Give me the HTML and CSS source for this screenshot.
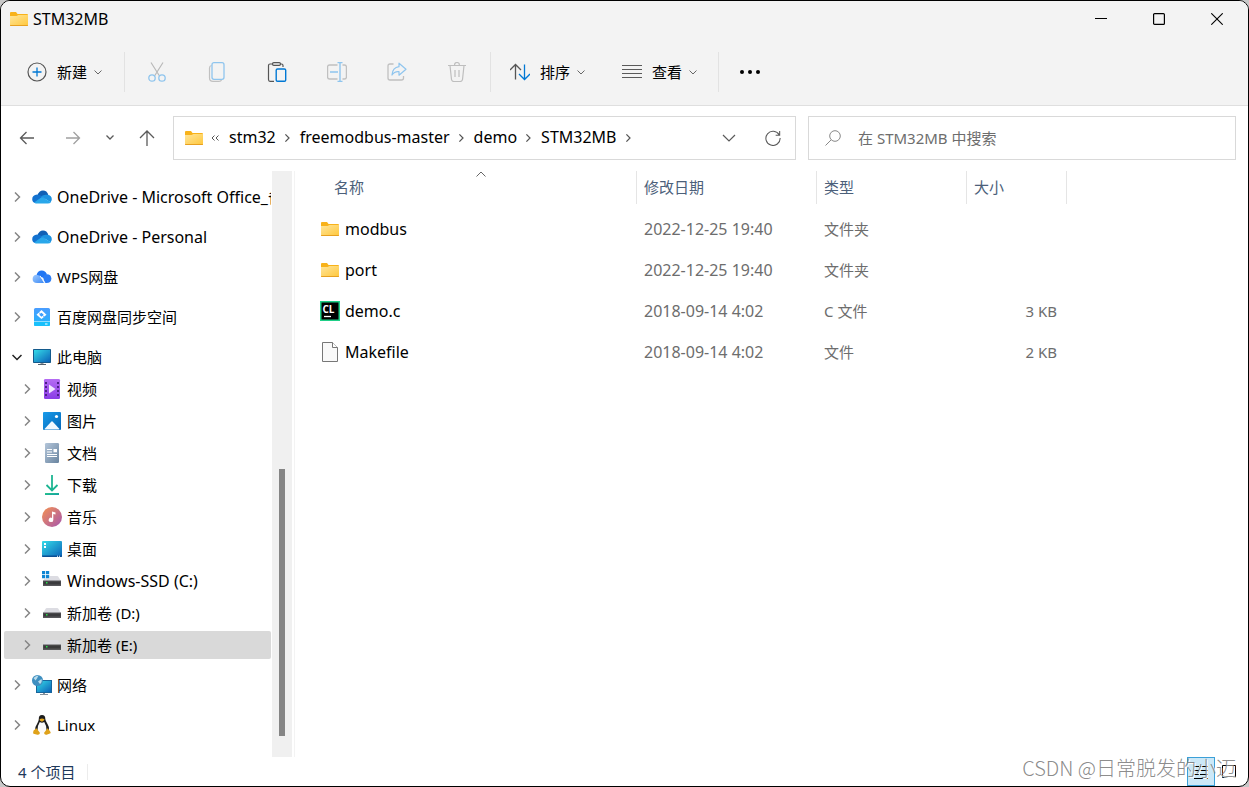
FILE: index.html
```
<!DOCTYPE html>
<html lang="zh-CN">
<head>
<meta charset="utf-8">
<title>STM32MB</title>
<link rel="stylesheet" href="styles.css">
</head>
<body>
<svg class="defs" aria-hidden="true">
  <defs>
    <linearGradient id="gFolder" x1="0" y1="0" x2="1" y2="1"><stop offset="0" stop-color="#ffe59a"/><stop offset="1" stop-color="#ffc83d"/></linearGradient>
    <linearGradient id="gScreen" x1="0" y1="0" x2="1" y2="1"><stop offset="0" stop-color="#35dbe8"/><stop offset="1" stop-color="#0b62b8"/></linearGradient>
    <linearGradient id="gVideo" x1="0" y1="0" x2="0" y2="1"><stop offset="0" stop-color="#b56cf3"/><stop offset="1" stop-color="#8a3ce6"/></linearGradient>
    <linearGradient id="gPicture" x1="0" y1="0" x2="1" y2="1"><stop offset="0" stop-color="#189bea"/><stop offset="1" stop-color="#0567b8"/></linearGradient>
    <linearGradient id="gDoc" x1="0" y1="0" x2="1" y2="1"><stop offset="0" stop-color="#b4c6da"/><stop offset="1" stop-color="#69849f"/></linearGradient>
    <linearGradient id="gDown" x1="0" y1="0" x2="1" y2="1"><stop offset="0" stop-color="#2dc88a"/><stop offset="1" stop-color="#0e9ba5"/></linearGradient>
    <linearGradient id="gMusic" x1="0" y1="0" x2="1" y2="1"><stop offset="0" stop-color="#f59250"/><stop offset="1" stop-color="#a656b0"/></linearGradient>
    <linearGradient id="gBaidu" x1="0" y1="0" x2="0" y2="1"><stop offset="0" stop-color="#4a9dff"/><stop offset="1" stop-color="#1fb6fb"/></linearGradient>
    <linearGradient id="gWps" x1="0" y1="0" x2="1" y2="1"><stop offset="0" stop-color="#9cc8ff"/><stop offset="1" stop-color="#3f8cf5"/></linearGradient>
    <symbol id="folder" viewBox="0 0 20 20">
      <path d="M1 4q0-1 1-1h5l1.500 2H18q1 0 1 1v3H1z" fill="#f8b21a"/>
      <path d="M1 7h6.500l2-1H19v10.500H1z" fill="url(#gFolder)"/>
      <path d="M1 16h18v.6q0 .4-.5.400h-17q-.5 0-.5-.4z" fill="#e7a020"/>
    </symbol>
    <symbol id="onedrive" viewBox="0 0 20 20">
      <path d="M5.500 8.200Q7 3.500 11 3.500q4 0 5.300 4.300L10 11z" fill="#0f5fb5"/>
      <path d="M.2 12.300q0-4.600 5-4.900 2.500 0 4.300 1.700l4 3-9.500 4.200Q.2 15.800.2 12.300z" fill="#1372d0"/>
      <path d="M9 9.300q3-2.200 6.500-1.500 4.300.5 4.300 4.500 0 1.700-1.300 2.900z" fill="#1b91e0"/>
      <path d="M2.200 15.500q4-3 7.800-5.500l9 5.200q-1.200 1.200-3.200 1.200H4.500q-1.500 0-2.300-.9z" fill="#29a7ea"/>
    </symbol>
    <symbol id="wps" viewBox="0 0 20 20">
      <path d="M4.500 8.500Q5.500 3.500 9.800 3.500q3.500 0 5 3.500l-2.800 4z" fill="#2176f3"/>
      <path d="M14 7.300q5-.5 5.400 4.200-.2 4.500-5 4.500h-1.500l-2-6q1.300-2 3.100-2.700z" fill="#2c7df5"/>
      <path d="M.6 12q0-4 4-4.200 2.600 0 4.300 2.600L12 16H5Q.6 16 .6 12z" fill="url(#gWps)"/>
      <path d="M8 8.800l5 7.200" stroke="#e7f2ff" stroke-width="1"/>
    </symbol>
    <symbol id="baidu" viewBox="0 0 20 20">
      <rect x="2" y="1" width="16" height="18" rx="1.500" fill="url(#gBaidu)"/>
      <path d="M2 14h16v3.500q0 1.500-1.500 1.500h-13Q2 19 2 17.500z" fill="#18c0fb"/>
      <path d="M2 14.500h16" stroke="#8fdcff"/>
      <path d="M9.500 3l5 4.700-5 4.300-5-4.300z" fill="#fff"/><path d="M9.500 5.800l2.200 2-2.200 1.900-2.200-1.900z" fill="#359cfb"/>
      <path d="M6 5l7 5.500" stroke="#4aa5ff" stroke-width=".8"/>
      <path d="M13 17h2.500" stroke="#fff"/>
    </symbol>
    <symbol id="pc" viewBox="0 0 20 20">
      <rect x="1" y="2" width="18" height="14" rx=".7" fill="#145a8c"/><rect x="2" y="3" width="16" height="12" fill="url(#gScreen)"/>
      <path d="M8.500 16h3v1.500h-3z" fill="#8a949c"/><path d="M6 17h8v1H6z" fill="#56616b"/>
    </symbol>
    <symbol id="video" viewBox="0 0 20 20">
      <rect x="2" y="0" width="16" height="20" rx="1.200" fill="url(#gVideo)"/>
      <path d="M4 3v15M16 3v15" stroke="#4d2188" stroke-width="2" stroke-dasharray="2 2"/>
      <path d="M7 5.500v9l6.500-4.500z" fill="#f1e6ff"/>
    </symbol>
    <symbol id="picture" viewBox="0 0 20 20">
      <rect x="1" y="1" width="18" height="18" rx="1" fill="url(#gPicture)"/>
      <path d="M2.500 18l6.700-7.300q.8-.7 1.600 0L17.500 18q-.2.500-.8.500H3.300q-.6 0-.8-.5z" fill="#f1f8ff"/><circle cx="14.500" cy="5.500" r="1.600" fill="#fff"/>
    </symbol>
    <symbol id="doc" viewBox="0 0 20 20">
      <rect x="3" y="0" width="14" height="20" rx="1.200" fill="url(#gDoc)"/>
      <path d="M5 6.500h5M5 9h5M5 11.500h10M5 13.500h10" stroke="#fff" stroke-width="1.200"/><path d="M11.500 6h3.500v3.200h-3.500z" fill="#fff"/>
    </symbol>
    <symbol id="download" viewBox="0 0 20 20">
      <path d="M10 0v15M4.500 10l5.500 5.500 5.500-5.500" fill="none" stroke="#1db592" stroke-width="1.800"/>
      <path d="M3 18h14v2H3z" fill="url(#gDown)"/>
    </symbol>
    <symbol id="music" viewBox="0 0 20 20">
      <circle cx="10" cy="10" r="10" fill="url(#gMusic)"/>
      <path d="M10 4.500l3.500 1v2l-2.200-.6v6a2.300 2.200 0 1 1-1.300-2z" fill="#fff"/>
    </symbol>
    <symbol id="desktop" viewBox="0 0 20 20">
      <rect x="0" y="2" width="20" height="16" rx="1" fill="url(#gScreen)"/>
      <path d="M0 16.500h20v.5q0 1-1 1H1q-1 0-1-1z" fill="#0b4f94"/>
      <path d="M2 4h2v2H2zM2 7h2v2H2zM15 16.700h1v1h-1zM17 16.700h1v1h-1z" fill="#fff"/>
    </symbol>
    <symbol id="drive" viewBox="0 0 20 20">
      <path d="M3.500 6q.3-1 1.500-1h10q1.200 0 1.500 1L19 10H1z" fill="#dcdce2"/>
      <path d="M1 9.500h18V15H1z" fill="#56565a"/><path d="M1.500 10.500h17v3h-17z" fill="#3a3a3d"/><path d="M4 11h1.500v1.500H4z" fill="#28e04a"/>
    </symbol>
    <symbol id="ssd" viewBox="0 0 20 20">
      <use href="#drive"/>
      <path d="M0 0h7.500v7.500H0z" fill="#fff"/>
      <path d="M0 0h3.200v3.200H0zM4 0h3.200v3.200H4zM0 4h3.200v3.200H0zM4 4h3.200v3.200H4z" fill="#0e86d4"/>
    </symbol>
    <symbol id="network" viewBox="0 0 20 20">
      <path d="M4 5h16v13H4z" fill="#17659c"/><path d="M5 6h14v11H5z" fill="url(#gScreen)"/>
      <path d="M11 18h2v1.500h-2zM8 19h8v1H8z" fill="#84919c"/>
      <circle cx="5.500" cy="5.500" r="5.500" fill="#3f8fc0"/><path d="M1.500 3q2.500-2.500 5-2.500L5 3.500 3.500 5.500zM6 6.500l3.500-2.500q1 3-1.500 5z" fill="#b9dcec"/>
    </symbol>
    <symbol id="tux" viewBox="0 0 20 20">
      <path d="M6.800 4q-.2-4 3.200-4t3.300 4q.2 2 2.200 5t1.500 6l-3 3H6.200l-3-3Q2.800 12 5 9q1.900-3 1.800-5z" fill="#1d1d1d"/>
      <path d="M7.800 7q2.200 1.500 4.400 0 2.600 4 2.300 8-.5 3.500-4.500 3.500T5.500 15q-.2-4 2.300-8z" fill="#fafafa"/>
      <path d="M7.500 4.300q2.500-1.500 5 0 0 1.300-2.500 2.500-2.500-1-2.500-2.500z" fill="#e8a91c"/>
      <path d="M4.500 13.200l3.500 4.800q-.5 2.200-2.700 1.700l-3.800-1q-.8-.6.100-3.200zM15.500 13.200L12 18q.5 2.200 2.700 1.700l3.800-1.500q.6-1-1-2.800z" fill="#dfa21a"/>
    </symbol>
    <symbol id="clion" viewBox="0 0 20 20">
      <path d="M0 0h20v20H0z" fill="#1fcf87"/><path d="M1.500 1.500h17v17h-17z" fill="#000"/>
      <text x="2.500" y="11.500" class="cl-text">CL</text><path d="M4 15.500h7" stroke="#fff" stroke-width="1.300"/>
    </symbol>
    <symbol id="file" viewBox="0 0 20 20">
      <path d="M2.500.5h10L17.500 5.500v14h-15z" fill="#f9f9f9" stroke="#777"/><path d="M12.500.5v5h5" fill="#fff" stroke="#777"/>
    </symbol>
    <symbol id="chev" viewBox="0 0 10 10"><path d="M3 .5L7.500 5 3 9.500" fill="none" stroke="currentColor" stroke-width="1.500"/></symbol>
    <symbol id="down" viewBox="0 0 10 10"><path d="M1.500 3.500L5 7l3.500-3.500" fill="none" stroke="currentColor"/></symbol>
  </defs>
</svg>

<main class="window">
  <header class="titlebar">
    <svg class="icon"><use href="#folder"/></svg>
    <h1 class="title">STM32MB</h1>
    <button class="caption" aria-label="最小化"><svg viewBox="0 0 12 12"><path d="M0 5.500h12" stroke="#000"/></svg></button>
    <button class="caption" aria-label="最大化"><svg viewBox="0 0 12 12"><rect x=".6" y=".6" width="10.800" height="10.800" rx="1" fill="none" stroke="#000" stroke-width="1.200"/></svg></button>
    <button class="caption" aria-label="关闭"><svg viewBox="0 0 12 12"><path d="M.3.3l11.400 11.400M11.700.3L.3 11.700" stroke="#000" stroke-width="1.100"/></svg></button>
  </header>

  <div class="toolbar" role="toolbar" aria-label="命令">
    <button class="cmd cmd-new">
      <svg class="icon" viewBox="0 0 20 20" fill="none"><circle cx="10" cy="10" r="9" stroke="#555" stroke-width="1.200"/><path d="M10 5.500v9M5.500 10h9" stroke="#0078d4" stroke-width="1.300"/></svg>
      <span>新建</span><svg class="caret"><use href="#down"/></svg>
    </button>
    <div class="tools">
      <button class="tool" aria-label="剪切"><svg class="icon" viewBox="0 0 20 20" fill="none"><path d="M4 .5l8.500 13.500M16 .5L7.500 14" stroke="#b9b9b9" stroke-width="1.200"/><circle cx="5" cy="16" r="3.200" stroke="#8fc5ee" stroke-width="1.300"/><circle cx="15" cy="16" r="3.200" stroke="#8fc5ee" stroke-width="1.300"/></svg></button>
      <button class="tool" aria-label="复制"><svg class="icon" viewBox="0 0 20 20" fill="none"><path d="M4.500 3.500q-2 .3-2 2.500v10q0 3.400 3.500 3.400h6q2 0 2.500-1.400" stroke="#c0c0c0" stroke-width="1.200"/><rect x="5" y=".7" width="12" height="16.600" rx="2" fill="#f3f3f3" stroke="#8fc5ee" stroke-width="1.300"/></svg></button>
      <button class="tool" aria-label="粘贴"><svg class="icon" viewBox="0 0 20 20" fill="none"><path d="M5.500 2H3q-1.500 0-1.500 1.500v14Q1.500 19.300 3 19.300h4M13.500 2h1q1.500 0 1.500 1.500V5" stroke="#555" stroke-width="1.200"/><rect x="5.500" y=".6" width="8" height="2.700" rx="1.300" stroke="#555" stroke-width="1.200"/><rect x="9.200" y="7" width="9.500" height="12.300" rx="1.300" fill="#f3f3f3" stroke="#0078d4" stroke-width="1.400"/></svg></button>
      <button class="tool" aria-label="重命名"><svg class="icon" viewBox="0 0 20 20" fill="none"><path d="M10.500 3H2.500Q.6 3 .6 5v10q0 2 1.900 2h8M15.500 3h2q1.900 0 1.900 2v10q0 2-1.900 2h-2" stroke="#c0c0c0" stroke-width="1.300"/><path d="M10.500.6h5M10.500 19.400h5M13 .6v18.800M3 10h8" stroke="#8fc5ee" stroke-width="1.400"/></svg></button>
      <button class="tool" aria-label="共享"><svg class="icon" viewBox="0 0 20 20" fill="none"><path d="M6.500 2H3Q1 2 1 4v12q0 2 2 2h11.500q2 0 2-2v-2" stroke="#c0c0c0" stroke-width="1.300"/><path d="M12 1.200l7 6-7 6v-3.500q-4.500-.5-7 3.300.5-7.500 7-8.300z" stroke="#8fc5ee" stroke-width="1.200" stroke-linejoin="round"/></svg></button>
      <button class="tool" aria-label="删除"><svg class="icon" viewBox="0 0 20 20" fill="none" stroke="#bebebe" stroke-width="1.200"><path d="M1 3.500h18M7.500 3.500q0-3 2.500-3t2.500 3M3 3.500l1.500 14q.3 2 2.300 2h6.400q2 0 2.300-2L17 3.500M8 8v7M12 8v7"/></svg></button>
    </div>
    <button class="cmd cmd-sort">
      <svg class="icon" viewBox="0 0 20 20" fill="none"><path d="M5.500 17.500V2.500M0 8l5.500-5.500L11 8" stroke="#555" stroke-width="1.300"/><path d="M14.500 2.500v15M9 12l5.500 5.500L20 12" stroke="#0078d4" stroke-width="1.300"/></svg>
      <span>排序</span><svg class="caret"><use href="#down"/></svg>
    </button>
    <button class="cmd cmd-view">
      <svg class="icon" viewBox="0 0 20 20"><path d="M0 3.500h20M0 7.500h20M0 11.500h20M0 15.500h20" stroke="#5a5a5a" stroke-width="1.100"/></svg>
      <span>查看</span><svg class="caret"><use href="#down"/></svg>
    </button>
    <button class="more" aria-label="更多"><svg viewBox="0 0 22 6"><circle cx="3" cy="3" r="2"/><circle cx="11" cy="3" r="2"/><circle cx="19" cy="3" r="2"/></svg></button>
  </div>

  <div class="location">
    <button class="go" aria-label="后退"><svg viewBox="0 0 16 16"><path d="M15 8H1.500M7.500 2l-6 6 6 6"/></svg></button>
    <button class="go go-off" aria-label="前进"><svg viewBox="0 0 16 16"><path d="M1 8h13.500M8.500 2l6 6-6 6"/></svg></button>
    <button class="go go-recent" aria-label="最近浏览的位置"><svg viewBox="0 0 16 16"><path d="M4.500 5.500L8 9l3.500-3.500"/></svg></button>
    <button class="go" aria-label="上移"><svg viewBox="0 0 16 16"><path d="M8 16V1M1 8l7-7 7 7"/></svg></button>
    <nav class="address" aria-label="地址">
      <svg class="icon"><use href="#folder"/></svg>
      <button class="overflow" aria-label="更多路径"><svg viewBox="0 0 10 10"><path d="M4.500 2.500L2 5l2.500 2.500M8.500 2.500L6 5l2.500 2.500"/></svg></button>
      <a href="#">stm32</a><svg class="sep"><use href="#chev"/></svg>
      <a href="#">freemodbus-master</a><svg class="sep"><use href="#chev"/></svg>
      <a href="#">demo</a><svg class="sep"><use href="#chev"/></svg>
      <a href="#">STM32MB</a><svg class="sep"><use href="#chev"/></svg>
      <button class="addr-btn addr-first" aria-label="历史"><svg viewBox="0 0 16 16"><path d="M2 5l6 6 6-6"/></svg></button>
      <button class="addr-btn" aria-label="刷新"><svg viewBox="0 0 18 18"><path d="M16 5.500A8 8 0 1 0 17 9M16.500 1v5H12"/></svg></button>
    </nav>
    <label class="search">
      <svg viewBox="0 0 16 16"><circle cx="10" cy="6" r="5.300"/><path d="M6.200 9.800L.5 15.500"/></svg>
      <input type="search" placeholder="在 STM32MB 中搜索" aria-label="搜索">
    </label>
  </div>

  <div class="body">
    <nav class="tree" aria-label="导航窗格">
      <ul class="roots">
        <li><a class="node latin" href="#"><svg class="twist"><use href="#chev"/></svg><svg class="icon"><use href="#onedrive"/></svg>OneDrive - Microsoft Office_备</a></li>
        <li><a class="node latin" href="#"><svg class="twist"><use href="#chev"/></svg><svg class="icon"><use href="#onedrive"/></svg>OneDrive - Personal</a></li>
        <li><a class="node" href="#"><svg class="twist"><use href="#chev"/></svg><svg class="icon"><use href="#wps"/></svg>WPS网盘</a></li>
        <li><a class="node" href="#"><svg class="twist"><use href="#chev"/></svg><svg class="icon"><use href="#baidu"/></svg>百度网盘同步空间</a></li>
        <li><a class="node" href="#"><svg class="twist open" viewBox="0 0 10 10"><path d="M.5 3L5 7.500 9.500 3" fill="none" stroke="currentColor" stroke-width="1.500"/></svg><svg class="icon"><use href="#pc"/></svg>此电脑</a>
          <ul class="children">
            <li><a class="node" href="#"><svg class="twist"><use href="#chev"/></svg><svg class="icon"><use href="#video"/></svg>视频</a></li>
            <li><a class="node" href="#"><svg class="twist"><use href="#chev"/></svg><svg class="icon"><use href="#picture"/></svg>图片</a></li>
            <li><a class="node" href="#"><svg class="twist"><use href="#chev"/></svg><svg class="icon"><use href="#doc"/></svg>文档</a></li>
            <li><a class="node" href="#"><svg class="twist"><use href="#chev"/></svg><svg class="icon"><use href="#download"/></svg>下载</a></li>
            <li><a class="node" href="#"><svg class="twist"><use href="#chev"/></svg><svg class="icon"><use href="#music"/></svg>音乐</a></li>
            <li><a class="node" href="#"><svg class="twist"><use href="#chev"/></svg><svg class="icon"><use href="#desktop"/></svg>桌面</a></li>
            <li><a class="node latin" href="#"><svg class="twist"><use href="#chev"/></svg><svg class="icon"><use href="#ssd"/></svg>Windows-SSD (C:)</a></li>
            <li><a class="node" href="#"><svg class="twist"><use href="#chev"/></svg><svg class="icon"><use href="#drive"/></svg>新加卷 (D:)</a></li>
            <li><a class="node selected" href="#"><svg class="twist"><use href="#chev"/></svg><svg class="icon"><use href="#drive"/></svg>新加卷 (E:)</a></li>
          </ul>
        </li>
        <li><a class="node" href="#"><svg class="twist"><use href="#chev"/></svg><svg class="icon"><use href="#network"/></svg>网络</a></li>
        <li><a class="node" href="#"><svg class="twist"><use href="#chev"/></svg><svg class="icon"><use href="#tux"/></svg>Linux</a></li>
      </ul>
    </nav>
    <div class="scrollbar"><div class="thumb"></div></div>
    <section class="files">
      <table class="list">
        <colgroup><col class="c-name"><col class="c-date"><col class="c-type"><col class="c-size"></colgroup>
        <thead><tr>
          <th><div class="head"><svg class="sort" viewBox="0 0 10 6"><path d="M.5 5.500L5 1l4.500 4.500"/></svg>名称</div></th>
          <th><div class="head">修改日期</div></th><th><div class="head">类型</div></th><th><div class="head">大小</div></th>
        </tr></thead>
        <tbody>
          <tr><td><span class="name latin"><svg class="icon"><use href="#folder"/></svg>modbus</span></td><td class="latin">2022-12-25 19:40</td><td>文件夹</td><td></td></tr>
          <tr><td><span class="name latin"><svg class="icon"><use href="#folder"/></svg>port</span></td><td class="latin">2022-12-25 19:40</td><td>文件夹</td><td></td></tr>
          <tr><td><span class="name latin"><svg class="icon"><use href="#clion"/></svg>demo.c</span></td><td class="latin">2018-09-14 4:02</td><td>C 文件</td><td class="num">3 KB</td></tr>
          <tr><td><span class="name latin"><svg class="icon"><use href="#file"/></svg>Makefile</span></td><td class="latin">2018-09-14 4:02</td><td>文件</td><td class="num">2 KB</td></tr>
        </tbody>
      </table>
    </section>
  </div>

  <footer class="status">
    <span class="count">4 个项目</span>
    <button class="view view-on" aria-label="详细信息"><svg viewBox="0 0 16 16"><path d="M1 2.500h5M7 2.500h8M1 6.500h5M7 6.500h8M1 10.500h5M7 10.500h8M1 14.500h14"/></svg></button>
    <button class="view" aria-label="大图标"><svg viewBox="0 0 16 16"><path d="M1.500 1.500h13v12h-13z"/></svg></button>
    <span class="watermark">CSDN @日常脱发的小迈</span>
  </footer>
</main>
</body>
</html>
```
FILE: styles.css
```
* { box-sizing: border-box; }
body {
  margin: 0;
  background: #c8c8c8;
  color: #000;
  font: 15px/20px "Noto Sans", "Noto Sans CJK SC", sans-serif;
}
button, input { font: inherit; color: inherit; border: 0; padding: 0; background: none; }
button { display: flex; align-items: center; justify-content: center; }
a { color: inherit; text-decoration: none; }
ul { list-style: none; margin: 0; padding: 0; }
svg { flex: none; display: block; }
.defs { position: absolute; width: 0; height: 0; }
.icon { width: 20px; height: 20px; }
.latin { font-size: 16px; }
.cl-text { font: bold 10px "Open Sans", sans-serif; fill: #fff; }

.window {
  display: flex;
  flex-direction: column;
  min-height: 100vh;
  border: 1px solid #000;
  border-radius: 10px;
  background: #fff;
  overflow: hidden;
}

.titlebar { display: flex; align-items: center; height: 36px; padding: 0 2px 0 8px; background: #f3f3f3; }
.title { flex: 1; margin: 0 0 0 4px; font-size: 16px; font-weight: 400; }
.caption { width: 58px; height: 36px; }
.caption svg { width: 12px; height: 12px; }

.toolbar {
  display: flex;
  align-items: center;
  padding: 15px 0 13px;
  background: #f3f3f3;
  border-bottom: 1px solid #dfdfdf;
}
.cmd { height: 40px; gap: 10px; white-space: nowrap; }
.caret { width: 10px; height: 10px; color: #666; margin-left: -4px; }
.cmd-new { width: 124px; padding: 0 0 0 26px; justify-content: flex-start; border-right: 1px solid #e2e2e2; }
.tools { display: flex; padding: 0 3px 0 2px; border-right: 1px solid #e2e2e2; }
.tool { width: 60px; height: 40px; }
.cmd-sort { padding: 0 17px 0 19px; }
.cmd-view { padding: 0 20px 0 19px; border-right: 1px solid #e2e2e2; }
.more { width: 62px; height: 40px; }
.more svg { width: 22px; height: 6px; }

.location { display: flex; padding: 10px 12px 11px 3px; }
.go { width: 46px; height: 44px; }
.go svg { width: 16px; height: 16px; fill: none; stroke: #5a5a5a; stroke-width: 1.300; }
.go-off svg { stroke: #a0a0a0; }
.go-recent { width: 28px; }
.address {
  flex: 1;
  display: flex;
  align-items: center;
  height: 44px;
  margin: 0 12px 0 3px;
  padding: 0 0 0 10px;
  border: 1px solid #d9d9d9;
  font-size: 16px;
}
.address a { padding-bottom: 2px; }
.overflow { width: 22px; margin-right: 3px; }
.overflow svg, .sep { width: 10px; height: 10px; }
.overflow svg { fill: none; stroke: #555; }
.sep { margin: 0 8px 0 6px; color: #555; padding: 1px; }
.addr-btn { width: 44px; height: 42px; }
.addr-first { margin-left: auto; }
.addr-btn svg { width: 16px; height: 16px; fill: none; stroke: #5a5a5a; stroke-width: 1.200; }
.search { flex: 0 1 428px; display: flex; align-items: center; gap: 17px; height: 44px; padding: 0 16px; border: 1px solid #d9d9d9; }
.search svg { width: 16px; height: 16px; fill: none; stroke: #888; }
.search input { flex: 1; min-width: 0; outline: 0; }
.search input::placeholder { color: #6d6d6d; opacity: 1; }

.body { flex: 1; display: flex; }
.tree { width: 271px; padding: 12px 1px 18px 3px; overflow: hidden; }
.roots { display: flex; flex-direction: column; gap: 12px; }
.children { display: flex; flex-direction: column; gap: 4px; padding-top: 4px; }
.node { display: flex; align-items: center; height: 28px; padding-left: 8px; border-radius: 2px; white-space: nowrap; overflow: hidden; }
.node .icon { margin: 0 5px 0 10px; }
.children .node { padding-left: 18px; }
.twist { width: 10px; height: 10px; color: #868686; }
.twist.open { color: #222; }
.selected { background: #d9d9d9; }
.scrollbar { display: flex; flex-direction: column; width: 20px; padding: 298px 7px 21px; background: #f0f0f0; }
.thumb { flex: 1; background: #858585; }

.files { flex: 1; min-width: 0; margin-left: 2px; border-left: 1px solid #f3f3f3; }
.list { width: 772px; table-layout: fixed; border-collapse: collapse; }
.c-name { width: 342px; }
.c-date { width: 180px; }
.c-type { width: 150px; }
.c-size { width: 100px; }
.list th { padding: 0 0 4px; font-weight: 400; text-align: left; color: #4c607a; }
.head { position: relative; height: 33px; padding: 6px 7px; border-right: 1px solid #e5e5e5; }
th:first-child .head { padding-left: 39px; }
.sort { position: absolute; left: 50%; top: 0; width: 10px; height: 6px; margin-left: 10px; fill: none; stroke: #666; }
.list td { height: 41px; padding: 0 7px; color: #6d6d6d; }
.list td:first-child { padding-left: 25px; color: #000; }
.list .num { padding-right: 10px; text-align: right; }
.name { display: flex; align-items: center; gap: 5px; }

.status { position: relative; display: flex; align-items: center; height: 29px; padding-right: 5px; color: #1e395b; }
.count { margin-right: auto; padding: 0 12px 0 17px; line-height: 16px; border-right: 1px solid #ececec; }
.view { width: 28px; height: 29px; }
.view-on { background: #cce8f7; border: 1px solid #3ba0d8; }
.view svg { width: 16px; height: 16px; fill: none; stroke: #000; }
.watermark {
  position: absolute;
  right: 12px;
  top: -1px;
  font: 20px/24px "Noto Sans CJK SC", sans-serif;
  font-weight: 300;
  color: rgba(125, 125, 125, 0.9);
  text-shadow: 1px 1px 0 #fff;
  pointer-events: none;
}
```
